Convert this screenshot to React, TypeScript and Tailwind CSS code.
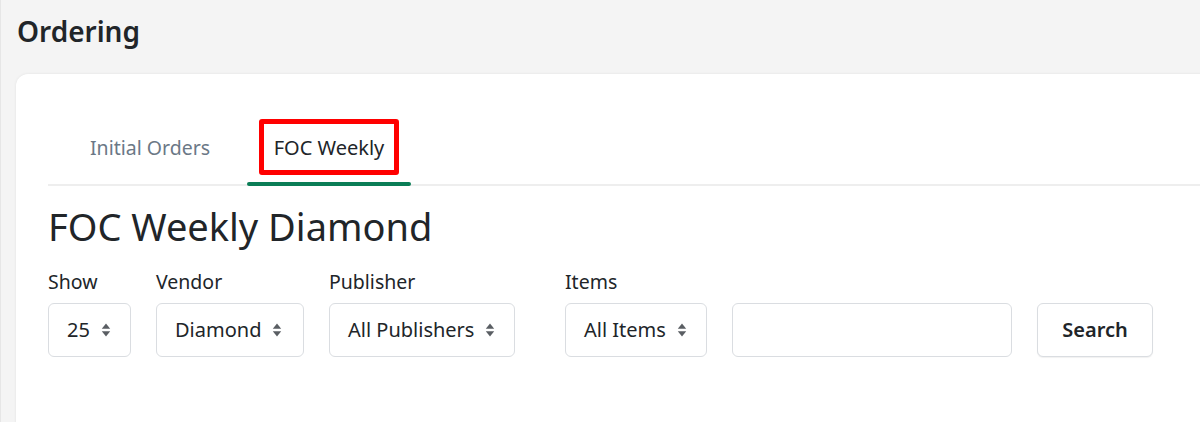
import React from 'react';

const SortIcon: React.FC = () => (
  <svg viewBox="0 0 10 14" className="w-[10px] h-[14px] ml-[11px] shrink-0" fill="#5a5e63">
    <path d="M5 0.5 L9.2 5.8 H0.8 Z" />
    <path d="M5 13.5 L9.2 8.2 H0.8 Z" />
  </svg>
);

const Select: React.FC<{ value: string; width: string }> = ({ value, width }) => (
  <div className={`${width} h-[54px] flex items-center pl-[18px] border border-[#dadde1] rounded-[6px] bg-white text-[20px] text-[#212529]`}>
    <span>{value}</span>
    <SortIcon />
  </div>
);

const Field: React.FC<{ label?: string; children: React.ReactNode }> = ({ label, children }) => (
  <div className="flex flex-col">
    <div className="h-[30px] text-[19.5px] text-[#212529] leading-[30px] mb-[6px]">{label ?? '\u00a0'}</div>
    {children}
  </div>
);

export default function App() {
  return (
    <div
      className="w-[1200px] h-[422px] overflow-hidden bg-[#f4f4f4] border-l border-[#e6e6e6]"
      style={{ fontFamily: '"Noto Sans", "Open Sans", sans-serif' }}
    >
      <h1 className="pl-[16px] pt-[13px] text-[28px] font-semibold text-[#212529] leading-[36px]">Ordering</h1>

      <div className="ml-[15px] mt-[25px] w-[1250px] h-[400px] bg-white rounded-[12px] shadow-[0_0_3px_rgba(0,0,0,0.08)] pl-[32px] pt-[41px]">
        {/* tabs */}
        <div className="flex border-b-2 border-[#eeeeee] h-[71px] items-stretch">
          <div className="ml-[17px] w-[171px] pl-[25px] pb-[4px] flex items-center text-[19.5px] text-[#6b7886]">Initial Orders</div>
          <div className="relative ml-[11px] w-[164px] pb-[4px] flex items-center justify-center text-[20px] text-[#212529]">
            FOC Weekly
            <div className="absolute left-0 right-0 -bottom-[2px] h-[4px] rounded-full bg-[#0a7d56]" />
            <div className="absolute left-[12px] right-[12px] top-[4px] h-[56px] border-[5px] border-[#ff0000] rounded-[3px]" />
          </div>
        </div>

        <h2 className="mt-[15px] text-[38px] leading-[50px] text-[#212529]">FOC Weekly Diamond</h2>

        <div className="flex items-start mt-[16px]">
          <Field label="Show">
            <Select value="25" width="w-[83px]" />
          </Field>
          <div className="ml-[25px]">
            <Field label="Vendor">
              <Select value="Diamond" width="w-[148px]" />
            </Field>
          </div>
          <div className="ml-[25px]">
            <Field label="Publisher">
              <Select value="All Publishers" width="w-[186px]" />
            </Field>
          </div>
          <div className="ml-[50px]">
            <Field label="Items">
              <Select value="All Items" width="w-[142px]" />
            </Field>
          </div>
          <div className="ml-[25px]">
            <Field>
              <input className="w-[280px] h-[54px] border border-[#dadde1] rounded-[6px] outline-none" />
            </Field>
          </div>
          <div className="ml-[25px]">
            <Field>
              <button className="w-[116px] h-[54px] border border-[#dadde1] rounded-[6px] bg-white text-[20px] font-semibold text-[#212529] shadow-[0_1px_1px_rgba(0,0,0,0.06)]">
                Search
              </button>
            </Field>
          </div>
        </div>
      </div>
    </div>
  );
}
